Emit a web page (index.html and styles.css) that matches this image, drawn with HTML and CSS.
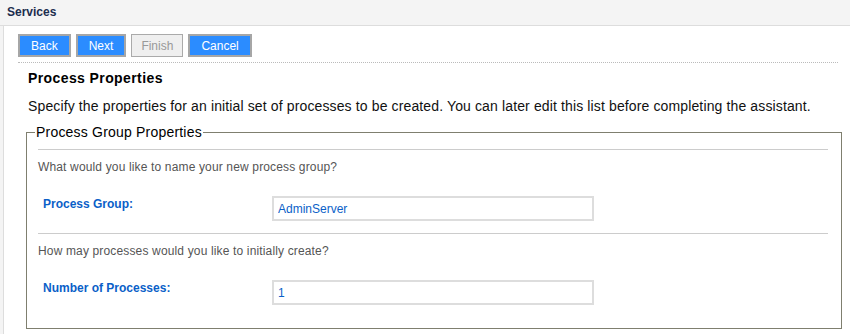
FILE: index.html
```html
<!DOCTYPE html>
<html lang="en">
<head>
    <meta charset="UTF-8">
    <title>Services</title>
    <link rel="stylesheet" href="styles.css">
</head>
<body>
    <div class="page-header">Services</div>

    <div class="panel">
        <div class="toolbar">
            <button class="btn">Back</button>
            <button class="btn">Next</button>
            <button class="btn btn-disabled" disabled>Finish</button>
            <button class="btn">Cancel</button>
        </div>

        <div class="step">
            <h2 class="step-title">Process Properties</h2>
            <p class="step-desc">Specify the properties for an initial set of processes to be created. You can later edit this list before completing the assistant.</p>
        </div>

        <fieldset class="group">
            <legend>Process Group Properties</legend>

            <div class="group-section">
                <p class="question">What would you like to name your new process group?</p>
                <div class="field-row">
                    <label class="field-label" for="group-name">Process Group:</label>
                    <input class="field-input" id="group-name" type="text" value="AdminServer">
                </div>
            </div>

            <div class="group-section">
                <p class="question">How may processes would you like to initially create?</p>
                <div class="field-row">
                    <label class="field-label" for="proc-count">Number of Processes:</label>
                    <input class="field-input" id="proc-count" type="text" value="1">
                </div>
            </div>
        </fieldset>
    </div>
</body>
</html>
```

FILE: styles.css
```css
:root {
    --blue: #2b8cff;
    --label-blue: #0b5fc8;
    --line: #cccccc;
    --frame: #7f7f6f;
}

* {
    box-sizing: border-box;
}

body {
    margin: 0;
    font-family: "Liberation Sans", Arial, sans-serif;
    color: #000;
    background-color: #f4f4f4;
    height: 334px;
    display: flex;
    flex-direction: column;
}

.page-header {
    height: 26px;
    line-height: 25px;
    padding-left: 7px;
    font-size: 12px;
    font-weight: bold;
    color: #1c2d4e;
    border-bottom: 1px solid #dddddd;
}

.panel {
    flex: 1;
    margin-left: 3px;
    border-left: 1px solid #dddddd;
    background: white;
    padding: 8px 8px 0 14px;
}

.toolbar {
    display: flex;
    gap: 5px;
    margin-right: 4px;
    padding-bottom: 5px;
    border-bottom: 1px dotted #bbbbbb;
}

.btn {
    height: 23px;
    padding: 0 11px;
    font-family: inherit;
    font-size: 12px;
    color: white;
    background-color: var(--blue);
    border: 2px solid #a6a6a6;
    border-radius: 0;
}

.btn-disabled {
    color: #999999;
    background-color: #efefef;
    border: 1px solid #aaaaaa;
    padding: 0 9px;
}

.step {
    padding: 7px 0 0 10px;
}

.step-title {
    margin: 0;
    font-size: 14px;
    line-height: 16px;
    font-weight: bold;
    letter-spacing: 0.4px;
}

.step-desc {
    margin: 12px 0 0;
    font-size: 14px;
    line-height: 16px;
    letter-spacing: 0.13px;
    color: #111111;
}

.group {
    margin: 10px 0 0 8px;
    padding: 0 13px 11px 11px;
    border: 1px solid var(--frame);
}

.group legend {
    margin-left: -3px;
    padding: 0 1px;
    font-size: 14px;
    line-height: 16px;
    letter-spacing: 0.2px;
}

.group-section {
    border-top: 1px solid var(--line);
    padding: 9px 0 12px;
    margin-top: 9px;
}

.group-section + .group-section {
    margin-top: 0;
    padding-top: 9px;
}

.question {
    margin: 0;
    font-size: 12px;
    line-height: 16px;
    letter-spacing: 0.15px;
    color: #555555;
}

.field-row {
    display: grid;
    grid-template-columns: 229px 322px;
    align-items: start;
    margin-top: 21px;
    padding-left: 5px;
}

.field-label {
    font-size: 12px;
    line-height: 16px;
    font-weight: bold;
    color: var(--label-blue);
}

.field-input {
    height: 25px;
    padding: 0 4px;
    font-family: inherit;
    font-size: 12px;
    color: var(--label-blue);
    border: 2px solid #dddddd;
    outline: none;
}
```
